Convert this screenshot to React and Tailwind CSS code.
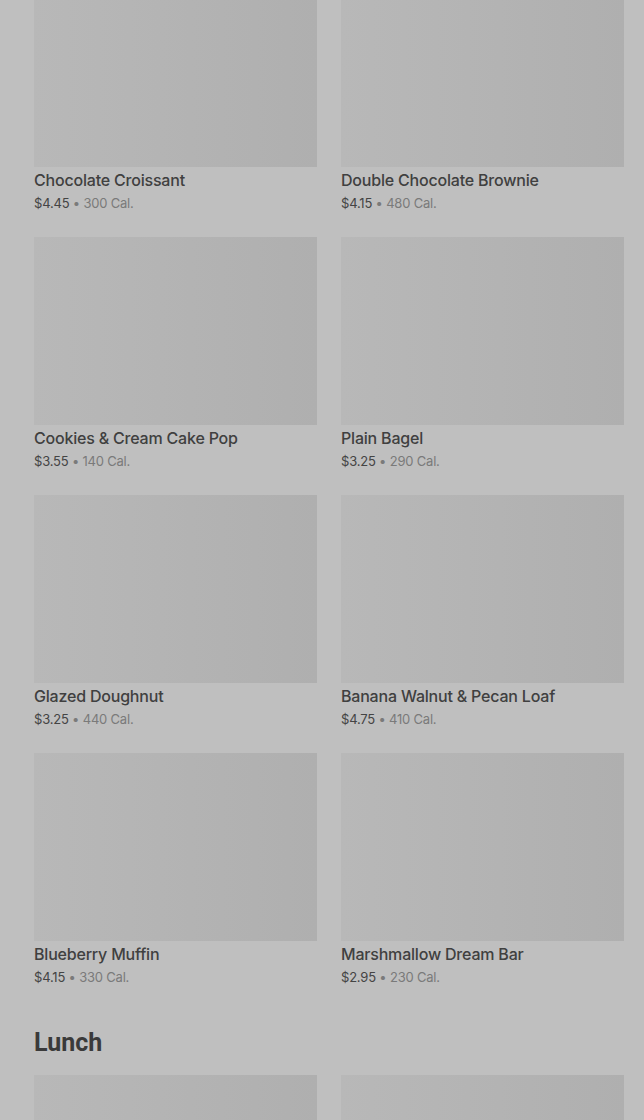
const breakfast = [
  ["Chocolate Croissant", "$4.45", "300 Cal."],
  ["Double Chocolate Brownie", "$4.15", "480 Cal."],
  ["Cookies & Cream Cake Pop", "$3.55", "140 Cal."],
  ["Plain Bagel", "$3.25", "290 Cal."],
  ["Glazed Doughnut", "$3.25", "440 Cal."],
  ["Banana Walnut & Pecan Loaf", "$4.75", "410 Cal."],
  ["Blueberry Muffin", "$4.15", "330 Cal."],
  ["Marshmallow Dream Bar", "$2.95", "230 Cal."],
];

function Card({ name, price, cal }) {
  return (
    <div className="flex flex-col">
      <div className="h-[188px] w-full bg-gradient-to-r from-[#b8b8b8] to-[#afafaf]" />
      <div className="mt-[3px] text-[16px] leading-[20px] font-medium tracking-[-0.2px] text-[#404040]">{name}</div>
      <div className="mt-[3px] text-[13px] leading-[20px] tracking-[-0.2px] text-[#7a7a7a]">
        <span className="text-[#444444]">{price}</span> • {cal}
      </div>
    </div>
  );
}

export default function App() {
  return (
    <div
      className="w-[644px] h-[1120px] overflow-hidden bg-[#bfbfbf]"
      style={{ fontFamily: "Inter, 'Liberation Sans', sans-serif" }}
    >
      <div className="mt-[-21px] pl-[34px] pr-[20px]">
        <div className="grid grid-cols-2 gap-x-[24px] gap-y-[24px]">
          {breakfast.map(([n, p, c]) => (
            <Card key={n} name={n} price={p} cal={c} />
          ))}
        </div>
        <h2
          className="mt-[40px] text-[25px] leading-[32px] font-bold text-[#3a3a3a]"
          style={{ fontFamily: "Roboto, 'Liberation Sans', sans-serif" }}
        >
          Lunch
        </h2>
        <div className="mt-[16px] grid grid-cols-2 gap-x-[24px]">
          <div className="h-[188px] bg-gradient-to-r from-[#b8b8b8] to-[#afafaf]" />
          <div className="h-[188px] bg-gradient-to-r from-[#b8b8b8] to-[#afafaf]" />
        </div>
      </div>
    </div>
  );
}
